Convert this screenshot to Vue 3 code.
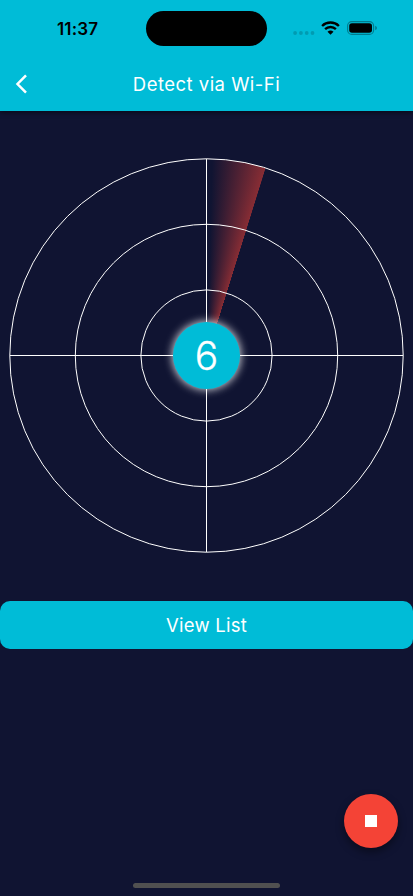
<script setup>
import { ref } from 'vue'

const title = 'Detect via Wi-Fi'
const found = ref(6)
const rings = [65.6, 131.2, 196.7]
</script>

<template>
  <main class="screen">
    <header class="top">
      <div class="status">
        <span class="time">11:37</span>
        <span class="island"></span>
        <div class="indicators">
          <svg class="dots" width="22" height="4" viewBox="0 0 22 4">
            <circle v-for="n in 4" :key="n" :cx="n * 5.8 - 3.7" cy="2" r="1.9" />
          </svg>
          <svg class="wifi" width="19" height="14" viewBox="0 0 19 14">
            <path d="M1.1 5 A12 12 0 0 1 17.9 5" />
            <path d="M4.1 8.1 A7.8 7.8 0 0 1 14.9 8.1" />
            <path class="fill" d="M9.5 13.7 L6.5 10.7 Q9.5 8.2 12.5 10.7 Z" />
          </svg>
          <svg class="battery" width="31" height="14" viewBox="0 0 31 14">
            <rect class="shell" x="0.6" y="0.6" width="26" height="12.8" rx="4.2" />
            <rect x="2.2" y="2.2" width="22.8" height="9.6" rx="2.8" />
            <path class="cap" d="M28.2 4.8 Q30 5.5 30 7 Q30 8.5 28.2 9.2 Z" />
          </svg>
        </div>
      </div>
      <div class="bar">
        <button class="back" aria-label="Back">
          <svg width="12" height="20" viewBox="0 0 12 20">
            <path d="M11 1.3 L2.5 10 L11 18.7" />
          </svg>
        </button>
        <h1>{{ title }}</h1>
      </div>
    </header>

    <section class="radar">
      <div class="sweep"></div>
      <svg class="grid" width="395" height="395" viewBox="-197.5 -197.5 395 395">
        <circle v-for="r in rings" :key="r" :r="r" />
        <path d="M0 -196.7 V196.7 M-196.7 0 H196.7" />
      </svg>
      <div class="count">{{ found }}</div>
    </section>

    <button class="list">View List</button>

    <footer class="bottom">
      <button class="stop" aria-label="Stop"><span></span></button>
      <div class="home"></div>
    </footer>
  </main>
</template>

<style>
body {
  margin: 0;
  background: #101432;
}
</style>

<style scoped>
.screen {
  box-sizing: border-box;
  display: flex;
  flex-direction: column;
  width: 413px;
  height: 896px;
  overflow: hidden;
  background: #101432;
  color: #fff;
  font-family: Inter, "Liberation Sans", sans-serif;
}
button {
  padding: 0;
  border: 0;
  color: inherit;
  font: inherit;
}
.top {
  flex: none;
  height: 110.5px;
  background: #00bcd7;
  box-shadow: 0 1px 5px rgba(0, 0, 0, 0.6);
}
.status {
  display: grid;
  grid-template-columns: 146px 121px 1fr;
  align-items: center;
  height: 57px;
}
.time {
  padding-left: 57px;
  color: #000;
  font-size: 17px;
  font-weight: 600;
  letter-spacing: 0.15px;
}
.island {
  height: 35.5px;
  border-radius: 18px;
  background: #000;
}
.indicators {
  display: flex;
  align-items: center;
  margin-top: -1px;
  padding-left: 26px;
}
.dots {
  margin-top: 9px;
  fill: #009bb2;
}
.wifi {
  margin-left: 5.5px;
  fill: none;
  stroke: #000;
  stroke-width: 2.4;
}
.wifi .fill {
  fill: #000;
  stroke: none;
}
.battery {
  margin-left: 7px;
}
.battery .shell {
  fill: none;
  stroke: #007b8d;
  stroke-width: 1.1;
}
.battery .cap {
  fill: #007b8d;
}
.bar {
  display: grid;
  grid-template-columns: 56px 1fr 56px;
  align-items: center;
  height: 54px;
}
.back {
  display: flex;
  padding-left: 15px;
  background: none;
}
.back path {
  fill: none;
  stroke: #fff;
  stroke-width: 2.5;
}
h1 {
  margin: 0;
  font-size: 18.5px;
  font-weight: 400;
  line-height: 24px;
  letter-spacing: 0.48px;
  text-align: center;
}
.radar {
  display: grid;
  flex: none;
  place-items: center;
  width: 395px;
  height: 395px;
  margin: 47.7px auto 0;
}
.radar > * {
  grid-area: 1 / 1;
}
.sweep {
  width: 394px;
  height: 394px;
  border-radius: 50%;
  background: conic-gradient(
    rgba(244, 67, 54, 0) 0deg,
    rgba(244, 67, 54, 0) 1.5deg,
    rgba(244, 67, 54, 0.52) 17.2deg,
    transparent 17.4deg
  );
}
.grid {
  fill: none;
  stroke: #fff;
  stroke-width: 1;
}
.count {
  display: flex;
  align-items: center;
  justify-content: center;
  width: 67px;
  height: 67px;
  border-radius: 50%;
  background: #00bcd7;
  box-shadow: 0 0 9px 1px rgba(255, 255, 255, 0.8);
  font-size: 39px;
  font-weight: 300;
  -webkit-text-stroke: 0.3px #fff;
}
.list {
  flex: none;
  width: 100%;
  height: 48px;
  margin-top: 47.5px;
  border-radius: 10px;
  background: #00bcd7;
  font-size: 18.5px;
  font-weight: 400;
  letter-spacing: 0.25px;
}
.bottom {
  display: flex;
  flex: 1;
  flex-direction: column;
  justify-content: flex-end;
}
.stop {
  display: grid;
  align-self: flex-end;
  place-items: center;
  width: 54px;
  height: 54px;
  margin-right: 15.5px;
  border-radius: 50%;
  background: #f44336;
  box-shadow: 0 4px 9px rgba(0, 0, 0, 0.42);
}
.stop span {
  width: 12px;
  height: 12px;
  background: #fff;
}
.home {
  align-self: center;
  width: 147px;
  height: 5px;
  margin: 35px 0 8px;
  border-radius: 3px;
  background: #505050;
}
</style>
